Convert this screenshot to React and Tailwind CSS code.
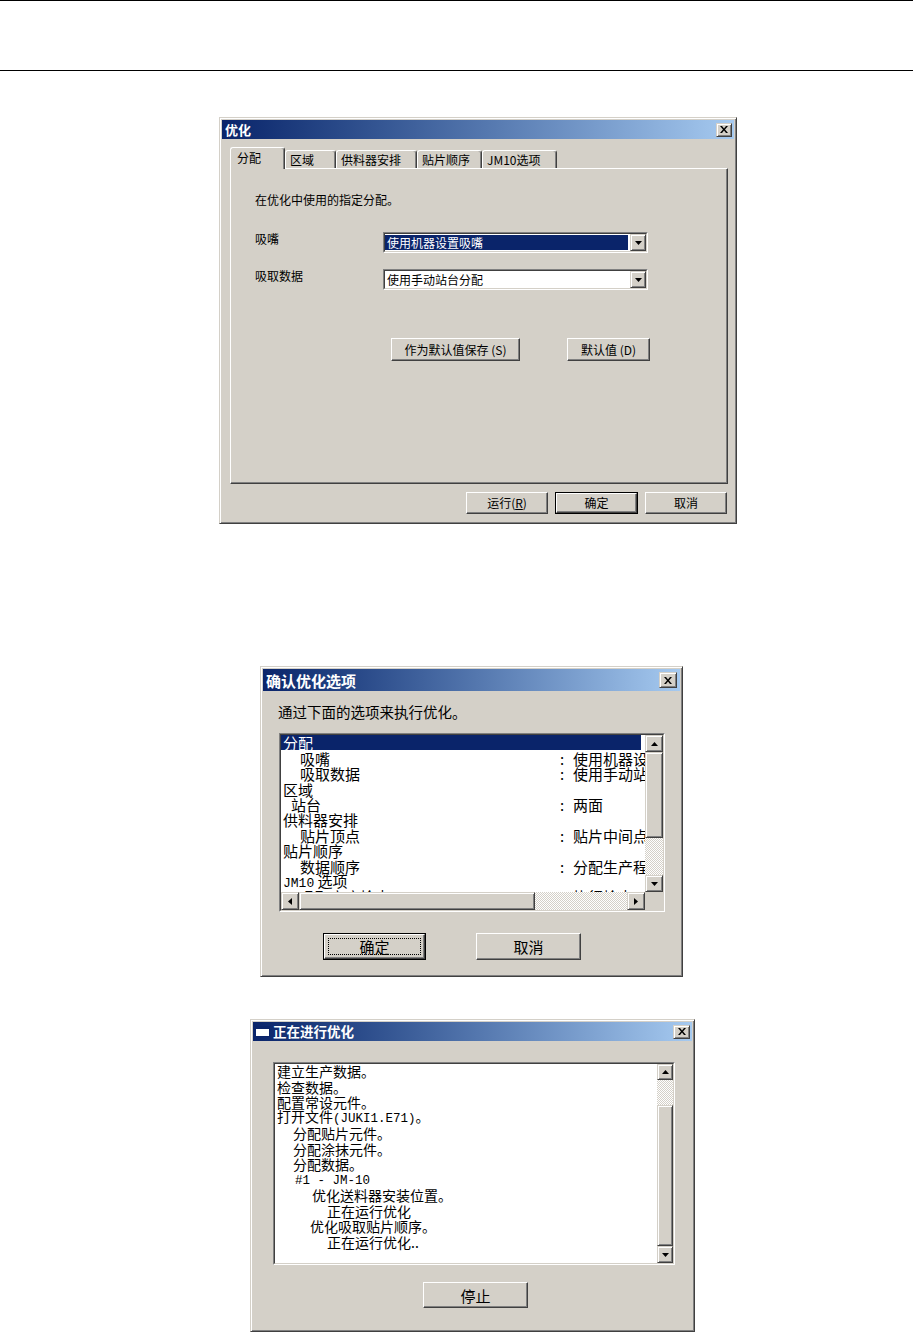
import React from 'react';

const CJK = "font-['Noto_Sans_CJK_SC',sans-serif]";
const MONO = "font-['Liberation_Mono','Noto_Sans_CJK_SC',monospace]";

// win2000 bevels
const RAISED =
  'bg-[#d4d0c8] border border-t-white border-l-white border-r-[#404040] border-b-[#404040] shadow-[inset_-1px_-1px_0_#808080]';
const SBTN =
  'bg-[#d4d0c8] border border-t-[#d4d0c8] border-l-[#d4d0c8] border-r-[#404040] border-b-[#404040] shadow-[inset_1px_1px_0_#ffffff,inset_-1px_-1px_0_#808080]';
const SUNKEN_OUT = 'border border-t-[#808080] border-l-[#808080] border-r-white border-b-white';
const SUNKEN_IN = 'border border-t-[#404040] border-l-[#404040] border-r-[#d4d0c8] border-b-[#d4d0c8]';
const DITHER =
  'bg-[image:repeating-conic-gradient(#d4d0c8_0_25%,#ffffff_0_50%)] bg-[length:2px_2px]';

function Tri({ dir = 'down' }) {
  const paths = {
    down: 'M0 0H7L3.5 4Z',
    up: 'M0 4H7L3.5 0Z',
    left: 'M4 0V7L0 3.5Z',
    right: 'M0 0V7L4 3.5Z',
  };
  const v = dir === 'up' || dir === 'down';
  return (
    <svg width={v ? 7 : 4} height={v ? 4 : 7} viewBox={v ? '0 0 7 4' : '0 0 4 7'}>
      <path d={paths[dir]} fill="#000" />
    </svg>
  );
}

function CloseBtn({ className }) {
  return (
    <div className={`${SBTN} ${className} flex items-center justify-center`}>
      <svg width="8" height="7" viewBox="0 0 8 7">
        <path d="M0 0h2l2 2.5L6 0h2L5 3.5 8 7H6L4 4.5 2 7H0l3-3.5z" fill="#000" />
      </svg>
    </div>
  );
}

function Window({ className, titleClass, textClass, closeClass, icon, title, children }) {
  return (
    <div
      className={`${className} flex flex-col bg-[#d4d0c8] border border-t-[#d4d0c8] border-l-[#d4d0c8] border-r-[#404040] border-b-[#404040] shadow-[inset_1px_1px_0_#ffffff,inset_-1px_-1px_0_#808080] p-[2px]`}
    >
      <div
        className={`${titleClass} shrink-0 flex items-center justify-between bg-linear-to-r from-[#0a246a] to-[#a6caf0] pl-[2px] pr-[2px]`}
      >
        <div className="flex items-center gap-[3px]">
          {icon}
          <span className={`${textClass} font-bold text-white leading-none`}>{title}</span>
        </div>
        <CloseBtn className={closeClass} />
      </div>
      {children}
    </div>
  );
}

function Btn({ className = '', def = false, focus = false, children }) {
  const inner = (
    <div className={`${RAISED} w-full h-full flex items-center justify-center ${focus ? 'p-[3px]' : ''}`}>
      {focus ? (
        <div className="w-full h-full border border-dotted border-black flex items-center justify-center">
          {children}
        </div>
      ) : (
        children
      )}
    </div>
  );
  return <div className={`${className} ${def ? 'border border-black' : ''}`}>{inner}</div>;
}

function Combo({ value, selected }) {
  return (
    <div className={`${SUNKEN_OUT} w-[265px] h-[21px]`}>
      <div className={`${SUNKEN_IN} h-full bg-white flex`}>
        <div className="flex-1 flex py-px pr-[2px]">
          <div
            className={`flex-1 flex items-center pl-[2px] text-[12px] leading-none ${
              selected ? 'bg-[#0a246a] text-white' : 'text-black'
            }`}
          >
            {value}
          </div>
        </div>
        <div className={`${SBTN} w-[16px] flex items-center justify-center`}>
          <Tri dir="down" />
        </div>
      </div>
    </div>
  );
}

function OptimizeDialog() {
  const tabs = [
    { label: '区域', w: 'w-[51px]' },
    { label: '供料器安排', w: 'w-[81px]' },
    { label: '贴片顺序', w: 'w-[65px]' },
    { label: 'JM10选项', w: 'w-[75px]' },
  ];
  return (
    <Window
      className="ml-[219px] mt-[46px] w-[518px] h-[407px]"
      titleClass="h-[19px] pl-[3px]"
      textClass="text-[13px]"
      closeClass="w-[16px] h-[14px]"
      title="优化"
    >
      <div className="relative z-10 flex items-end h-[21px] ml-[8px] mt-[8px] text-[12px]">
        <div className="h-[22px] -mb-px w-[55px] bg-[#d4d0c8] border-t border-l border-r border-t-white border-l-white border-r-[#404040] shadow-[inset_-1px_0_0_#808080] rounded-t-[3px] pl-[6px] pt-[3px] leading-[14px]">
          分配
        </div>
        {tabs.map((t) => (
          <div
            key={t.label}
            className={`${t.w} h-[18px] border-t border-l border-r border-t-white border-l-white border-r-[#404040] shadow-[inset_-1px_0_0_#808080] rounded-t-[3px] pl-[4px] pt-[2px] leading-[14px] whitespace-nowrap`}
          >
            {t.label}
          </div>
        ))}
      </div>
      <div className={`${RAISED} ml-[8px] mr-[6px] h-[316px] pt-[24px] pl-[24px] text-[12px] leading-[14px]`}>
        <div>在优化中使用的指定分配。</div>
        <div className="flex mt-[25px]">
          <div className="w-[128px]">吸嘴</div>
          <Combo value="使用机器设置吸嘴" selected />
        </div>
        <div className="flex mt-[16px]">
          <div className="w-[128px]">吸取数据</div>
          <Combo value="使用手动站台分配" />
        </div>
        <div className="flex mt-[48px] ml-[136px] gap-[47px]">
          <Btn className="w-[129px] h-[23px]">作为默认值保存 (S)</Btn>
          <Btn className="w-[83px] h-[23px]">默认值 (D)</Btn>
        </div>
      </div>
      <div className="flex justify-end gap-[7px] mt-[8px] pr-[7px] text-[12px] leading-none">
        <Btn className="w-[82px] h-[22px]">
          运行(<u>R</u>)
        </Btn>
        <Btn className="w-[83px] h-[22px]" def>
          确定
        </Btn>
        <Btn className="w-[82px] h-[22px]">取消</Btn>
      </div>
    </Window>
  );
}

// rows are 15 or 16px tall so that lines sit on whole pixels (~15.4 average)
const LIST_ROWS = [
  { l: '分配', pl: 'pl-[2px]', h: 'h-[15px]', sel: true },
  { l: '吸嘴', pl: 'pl-[19px]', h: 'h-[16px]', v: '使用机器设置吸嘴' },
  { l: '吸取数据', pl: 'pl-[19px]', h: 'h-[15px]', v: '使用手动站台分配' },
  { l: '区域', pl: 'pl-[2px]', h: 'h-[16px]' },
  { l: '站台', pl: 'pl-[10px]', h: 'h-[15px]', v: '两面' },
  { l: '供料器安排', pl: 'pl-[2px]', h: 'h-[15px]' },
  { l: '贴片顶点', pl: 'pl-[19px]', h: 'h-[16px]', v: '贴片中间点' },
  { l: '贴片顺序', pl: 'pl-[2px]', h: 'h-[15px]' },
  { l: '数据顺序', pl: 'pl-[19px]', h: 'h-[16px]', v: '分配生产程序' },
  { l: 'JM10', tail: ' 选项', pl: 'pl-[2px]', h: 'h-[15px]', mono: true },
  { l: '吸取高度检查', pl: 'pl-[19px]', h: 'h-[15px]', v: '执行检查' },
];

function ConfirmDialog() {
  return (
    <Window
      className="ml-[260px] mt-[142px] w-[423px] h-[311px]"
      titleClass="h-[22px] pl-[3px] pr-[3px]"
      textClass="text-[15px]"
      closeClass="w-[18px] h-[16px]"
      title="确认优化选项"
    >
      <div className="mt-[12px] ml-[15px] h-[17px] text-[14.5px] leading-[17px]">通过下面的选项来执行优化。</div>
      <div className={`${SUNKEN_OUT} mt-[13px] ml-[16px] w-[386px] h-[179px]`}>
        <div className={`${SUNKEN_IN} h-full bg-white flex flex-col`}>
          <div className="flex h-[157px]">
            <div className="flex-1 overflow-hidden text-[15px] leading-[15px] whitespace-nowrap">
              {LIST_ROWS.map((r) => (
                <div
                  key={r.l}
                  className={`flex items-center ${r.h} ${r.sel ? 'bg-[#0a246a] text-white mr-[4px]' : 'text-black'}`}
                >
                  <div className={`w-[279px] shrink-0 ${r.pl}`}>
                    {r.mono ? (
                      <>
                        <span className={`${MONO} text-[13px]`}>{r.l}</span>
                        {r.tail}
                      </>
                    ) : (
                      r.l
                    )}
                  </div>
                  {r.v && (
                    <>
                      <span className="w-[13px] shrink-0">:</span>
                      <span>{r.v}</span>
                    </>
                  )}
                </div>
              ))}
            </div>
            <div className="w-[18px] flex flex-col">
              <div className={`${SBTN} h-[17px] flex items-center justify-center`}>
                <Tri dir="up" />
              </div>
              <div className={`${SBTN} h-[86px]`} />
              <div className={`${DITHER} h-[37px]`} />
              <div className={`${SBTN} h-[17px] flex items-center justify-center`}>
                <Tri dir="down" />
              </div>
            </div>
          </div>
          <div className="flex h-[18px]">
            <div className={`${SBTN} w-[18px] flex items-center justify-center`}>
              <Tri dir="left" />
            </div>
            <div className={`${SBTN} w-[236px]`} />
            <div className={`${DITHER} w-[92px]`} />
            <div className={`${SBTN} w-[18px] flex items-center justify-center`}>
              <Tri dir="right" />
            </div>
            <div className="flex-1 bg-[#d4d0c8]" />
          </div>
        </div>
      </div>
      <div className="flex mt-[21px] ml-[60px] gap-[50px] text-[15px] leading-none">
        <Btn className="w-[103px] h-[27px]" def focus>
          确定
        </Btn>
        <Btn className="w-[105px] h-[27px]">取消</Btn>
      </div>
    </Window>
  );
}

const LOG = [
  { t: '建立生产数据。', pl: 'pl-[0px]', h: 'h-[15px]' },
  { t: '检查数据。', pl: 'pl-[0px]', h: 'h-[16px]' },
  { t: '配置常设元件。', pl: 'pl-[0px]', h: 'h-[15px]' },
  { t: '打开文件', mono: '(JUKI1.E71)', tail: '。', pl: 'pl-[0px]', h: 'h-[16px]' },
  { t: '分配贴片元件。', pl: 'pl-[16px]', h: 'h-[15px]' },
  { t: '分配涂抹元件。', pl: 'pl-[16px]', h: 'h-[16px]' },
  { t: '分配数据。', pl: 'pl-[16px]', h: 'h-[15px]' },
  { t: '', mono: '#1 - JM-10', pl: 'pl-[18px]', h: 'h-[16px]' },
  { t: '优化送料器安装位置。', pl: 'pl-[35px]', h: 'h-[15px]' },
  { t: '正在运行优化', pl: 'pl-[50px]', h: 'h-[16px]' },
  { t: '优化吸取贴片顺序。', pl: 'pl-[33px]', h: 'h-[15px]' },
  { t: '正在运行优化..', pl: 'pl-[50px]', h: 'h-[16px]' },
];

function ProgressDialog() {
  const icon = (
    <svg width="15" height="11" viewBox="0 0 15 11">
      <rect x="0.5" y="0.5" width="14" height="10" fill="#fff" stroke="#0a246a" />
      <rect x="1" y="1" width="13" height="2" fill="#0a246a" />
    </svg>
  );
  return (
    <Window
      className="ml-[250px] mt-[42px] w-[445px] h-[313px]"
      titleClass="h-[19px] pl-[2px] pr-[1px]"
      textClass="text-[13.5px]"
      closeClass="w-[17px] h-[14px]"
      icon={icon}
      title="正在进行优化"
    >
      <div className={`${SUNKEN_OUT} mt-[21px] ml-[20px] w-[402px] h-[203px]`}>
        <div className={`${SUNKEN_IN} h-full bg-white flex`}>
          <div className="flex-1 overflow-hidden pl-[2px] text-[14px] leading-[15px] whitespace-nowrap">
            {LOG.map((l, i) => (
              <div key={i} className={`flex items-center ${l.h} ${l.pl}`}>
                <span>
                  {l.t}
                  {l.mono && <span className={`${MONO} text-[12.5px]`}>{l.mono}</span>}
                  {l.tail}
                </span>
              </div>
            ))}
          </div>
          <div className="w-[16px] flex flex-col">
            <div className={`${SBTN} h-[16px] flex items-center justify-center`}>
              <Tri dir="up" />
            </div>
            <div className={`${DITHER} h-[25px]`} />
            <div className={`${SBTN} h-[141px]`} />
            <div className={`${SBTN} h-[17px] flex items-center justify-center`}>
              <Tri dir="down" />
            </div>
          </div>
        </div>
      </div>
      <div className="mt-[17px] ml-[170px] text-[15px] leading-none">
        <Btn className="w-[105px] h-[26px]">停止</Btn>
      </div>
    </Window>
  );
}

export default function App() {
  return (
    <div className={`${CJK} w-[913px] h-[1332px] bg-white text-black overflow-hidden`}>
      <div className="h-px bg-black" />
      <div className="h-[69px]" />
      <div className="h-px bg-black" />
      <OptimizeDialog />
      <ConfirmDialog />
      <ProgressDialog />
    </div>
  );
}
